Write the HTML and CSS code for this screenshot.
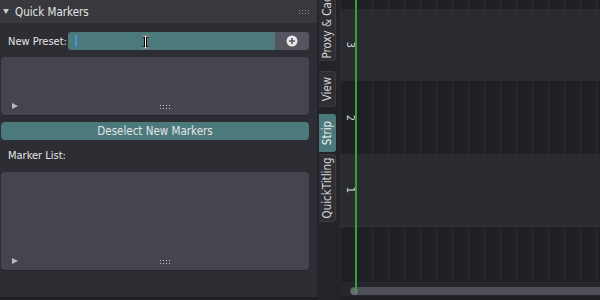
FILE: index.html
```html
<!DOCTYPE html>
<html lang="en">
<head>
  <meta charset="UTF-8" />
  <title>Quick Markers</title>
  <link rel="stylesheet" href="styles.css">
</head>
<body>
  <div class="panel">
    <div class="panel-header">
      <svg class="caret" width="6" height="5" viewBox="0 0 6 5"><path d="M0 0H6L3 5z" fill="#c8c9ce"/></svg>
      <span class="title">Quick Markers</span>
      <span class="grip"></span>
    </div>
    <div class="panel-body">
      <div class="row">
        <label class="row-label">New Preset:</label>
        <div class="text-field">
          <span class="text-cursor"></span>
          <svg class="ibeam" width="9" height="14" viewBox="0 0 9 14">
            <path d="M1 1h7M4.5 1v12M1 13h7" stroke="#000" stroke-width="3" fill="none"/>
            <path d="M1 1h7M4.5 1v12M1 13h7" stroke="#fff" stroke-width="1" fill="none"/>
          </svg>
        </div>
        <div class="add-btn">
          <svg width="12" height="12" viewBox="0 0 12 12">
            <circle cx="6" cy="6" r="5.5" fill="#e8e8e8"/>
            <path d="M6 3v6M3 6h6" stroke="#55565f" stroke-width="1.6"/>
          </svg>
        </div>
      </div>
      <div class="list-box small">
        <div class="list-foot">
          <svg class="expand" width="6" height="6" viewBox="0 0 6 6"><path d="M0 0L6 3L0 6z" fill="#b9bac0"/></svg>
          <span class="dots"></span>
        </div>
      </div>
      <div class="wide-btn">Deselect New Markers</div>
      <div class="section-label">Marker List:</div>
      <div class="list-box large">
        <div class="list-foot">
          <svg class="expand" width="6" height="6" viewBox="0 0 6 6"><path d="M0 0L6 3L0 6z" fill="#b9bac0"/></svg>
          <span class="dots"></span>
        </div>
      </div>
    </div>
  </div>

  <div class="tabs">
    <div class="tab proxy"><span>Proxy &amp; Cache</span></div>
    <div class="tab view"><span>View</span></div>
    <div class="tab strip active"><span>Strip</span></div>
    <div class="tab titling"><span>QuickTitling</span></div>
  </div>

  <div class="timeline">
    <div class="lane dark top"></div>
    <div class="lane light"><span class="ch">3</span></div>
    <div class="lane dark"><span class="ch">2</span></div>
    <div class="lane light"><span class="ch">1</span></div>
    <div class="lane dark bottom"></div>
    <div class="scroll-area">
      <div class="scrollbar"><span class="knob"></span></div>
    </div>
    <div class="playhead"></div>
  </div>
</body>
</html>
```

FILE: styles.css
```css
body { margin: 0; width: 600px; height: 300px; overflow: hidden; display: flex; background: #1d1e22; font-family: "DejaVu Sans Condensed", "DejaVu Sans", "Liberation Sans", sans-serif; font-size: 11px; color: #e4e4e4; }

.panel { width: 317px; height: 297px; background: #2d2e33; display: flex; flex-direction: column; }
.panel-header { height: 23px; background: #38393e; display: flex; align-items: center; padding: 0 8px 0 3px; }
.caret { margin-right: 6px; }
.title { flex: 1; font-size: 11.5px; }
.grip { width: 11px; height: 5px; background-image: radial-gradient(circle, #8b8c92 0.8px, transparent 1px); background-size: 3px 3px; }

.panel-body { padding: 9px 8px 0 1px; display: flex; flex-direction: column; }
.row { display: flex; height: 18px; align-items: center; }
.row-label { width: 60px; padding-left: 7px; }
.text-field { position: relative; flex: 1; height: 18px; background: #4c7a7c; border-radius: 3px 0 0 3px; }
.text-cursor { position: absolute; left: 7px; top: 3px; width: 2px; height: 12px; background: #4a8fe0; }
.ibeam { position: absolute; left: 73px; top: 3px; }
.add-btn { width: 34px; height: 18px; background: #54555e; border-radius: 0 3px 3px 0; display: flex; align-items: center; justify-content: center; }

.list-box { background: #44454f; border-radius: 4px; display: flex; flex-direction: column; justify-content: flex-end; margin-top: 7px; box-shadow: 0 1px 0 #25262a; }
.list-box.small { height: 58px; }
.list-box.large { height: 98px; margin-top: 7px; }
.list-foot { height: 14px; display: flex; align-items: center; padding-left: 11px; padding-bottom: 2px; }
.dots { margin-left: 141px; width: 11px; height: 5px; background-image: radial-gradient(circle, #c4c5ca 0.7px, transparent 0.9px); background-size: 3px 3px; }

.wide-btn { margin-top: 7px; height: 18px; background: #4c7a7c; border-radius: 4px; text-align: center; line-height: 18px; font-size: 11.5px; }
.section-label { padding-left: 7px; height: 25px; line-height: 32px; }

.tabs { width: 23px; height: 300px; background: #232429; display: flex; flex-direction: column; padding-left: 2px; box-sizing: border-box; }
.tab { width: 16px; background: #2e2f35; border: 1px solid #3a3b41; border-left: none; border-radius: 0 3px 3px 0; display: flex; align-items: center; justify-content: center; overflow: hidden; color: #d6d6d6; }
.tab span { transform: rotate(-90deg); white-space: nowrap; font-size: 11.5px; }
.tab.proxy { height: 60px; align-items: flex-end; border-top: none; border-radius: 0 0 3px 0; }
.tab.proxy span { display: block; margin-bottom: 32px; }
.tab.view { height: 34px; margin-top: 10px; }
.tab.strip { height: 36px; margin-top: 7px; }
.tab.active { background: #4c7a7c; border-color: #4c7a7c; color: #f0f0f0; }
.tab.titling { height: 66px; margin-top: 2px; }

.timeline { position: relative; flex: 1; height: 300px; display: flex; flex-direction: column; background: #1f2025; }
.lane { position: relative; background-image: repeating-linear-gradient(90deg, #2b2c32 0 1px, transparent 1px 16px); }
.lane.dark { background-color: #1f2025; }
.lane.light { height: 72px; background-color: #2a2b31; background-image: repeating-linear-gradient(90deg, #2d2e34 0 1px, transparent 1px 16px); }
.lane.dark { height: 73px; }
.lane.top { height: 9px; }
.lane.bottom { height: 56px; border-top: 1px solid #34353b; box-sizing: border-box; }
.ch { position: absolute; left: 4px; top: 50%; width: 12px; text-align: center; transform: translateY(-50%) rotate(90deg); font-size: 11px; color: #d8d8d8; }
.scroll-area { height: 14px; background: #26272c; padding: 5px 0 0 10px; box-sizing: border-box; }
.scrollbar { height: 8px; background: #4e4f58; border-radius: 4px 0 0 4px; display: flex; align-items: center; padding-left: 1px; }
.knob { width: 7px; height: 7px; border-radius: 50%; background: #6a6b73; }
.playhead { position: absolute; left: 15px; top: 0; width: 2px; height: 293px; background: #3d9a3d; }
```
